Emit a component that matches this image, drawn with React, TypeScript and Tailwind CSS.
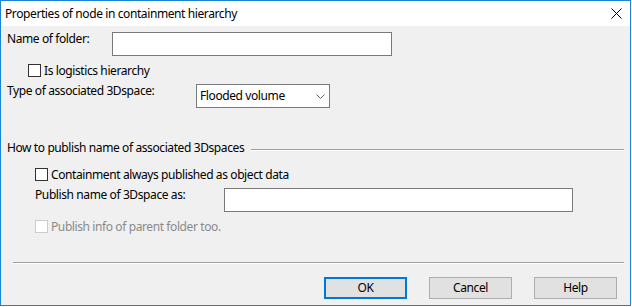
import React from 'react';

const font = "font-['Noto_Sans','Liberation_Sans',sans-serif] text-[12px] leading-[16px] tracking-[-0.4px]";

const Checkbox: React.FC<{ label: string; disabled?: boolean }> = ({ label, disabled }) => (
  <div className="flex items-center h-[13px]">
    <div
      className={`w-[13px] h-[13px] border bg-white ${disabled ? 'border-[#cccccc]' : 'border-[#333333]'}`}
    />
    <span className={`ml-[3px] whitespace-nowrap ${disabled ? 'text-[#8a8a8a]' : 'text-black'}`}>{label}</span>
  </div>
);

const Button: React.FC<{ label: string; primary?: boolean }> = ({ label, primary }) => (
  <div
    className={`w-[83px] h-[22px] flex items-center justify-center bg-[#e1e1e1] ${
      primary ? 'border-2 border-[#0078d7]' : 'border border-[#adadad]'
    }`}
  >
    {label}
  </div>
);

const App: React.FC = () => {
  return (
    <div className={`w-[632px] h-[307px] bg-white text-black ${font}`}>
      <div className="w-[631px] h-[306px] border border-[#1883d7] flex flex-col">
        {/* title bar */}
        <div className="h-[25px] bg-white flex items-center justify-between pl-[4px] pr-[8px]">
          <span className="whitespace-nowrap">Properties of node in containment hierarchy</span>
          <svg width="11" height="11" viewBox="0 0 11 11" className="block">
            <path d="M0.5 0.5 L10.5 10.5 M10.5 0.5 L0.5 10.5" stroke="#000" strokeWidth="1" />
          </svg>
        </div>

        <div className="flex-1 bg-[#f0f0f0] flex flex-col">
          {/* name of folder */}
          <div className="flex items-start mt-[6px] h-[24px]">
            <span className="ml-[6px] w-[105px] mt-[-1px] whitespace-nowrap">Name of folder:</span>
            <div className="w-[280px] h-[24px] bg-white border border-[#7a7a7a]" />
          </div>

          <div className="mt-[8px] ml-[27px]">
            <Checkbox label="Is logistics hierarchy" />
          </div>

          {/* type of 3Dspace */}
          <div className="flex items-start mt-[7px] h-[24px]">
            <span className="ml-[6px] w-[189px] mt-[-1px] whitespace-nowrap">Type of associated 3Dspace:</span>
            <div className="w-[134px] h-[24px] bg-white border border-[#7a7a7a] flex items-center justify-between pl-[3px] pr-[4px]">
              <span className="whitespace-nowrap">Flooded volume</span>
              <svg width="9" height="5" viewBox="0 0 9 5" className="block">
                <path d="M0.5 0.5 L4.5 4.5 L8.5 0.5" stroke="#606060" strokeWidth="1" fill="none" />
              </svg>
            </div>
          </div>

          {/* group header */}
          <div className="flex items-start mt-[32px] h-[16px]">
            <span className="ml-[6px] whitespace-nowrap">How to publish name of associated 3Dspaces</span>
            <div className="flex-1 ml-[7px] mr-[6px] mt-[9px] border-t border-b border-t-[#a0a0a0] border-b-white" />
          </div>

          <div className="mt-[12px] ml-[34px]">
            <Checkbox label="Containment always published as object data" />
          </div>

          <div className="flex items-start mt-[7px] h-[24px]">
            <span className="ml-[34px] w-[189px] mt-[-1px] whitespace-nowrap">Publish name of 3Dspace as:</span>
            <div className="w-[349px] h-[24px] bg-white border border-[#7a7a7a]" />
          </div>

          <div className="mt-[8px] ml-[34px]">
            <Checkbox label="Publish info of parent folder too." disabled />
          </div>

          {/* separator */}
          <div className="mt-[29px] ml-[12px] mr-[6px] border-t border-b border-t-[#a0a0a0] border-b-white" />

          {/* buttons */}
          <div className="flex justify-end gap-[22px] mt-[13px] mr-[13px]">
            <Button label="OK" primary />
            <Button label="Cancel" />
            <Button label="Help" />
          </div>
        </div>
      </div>
    </div>
  );
};

export default App;
